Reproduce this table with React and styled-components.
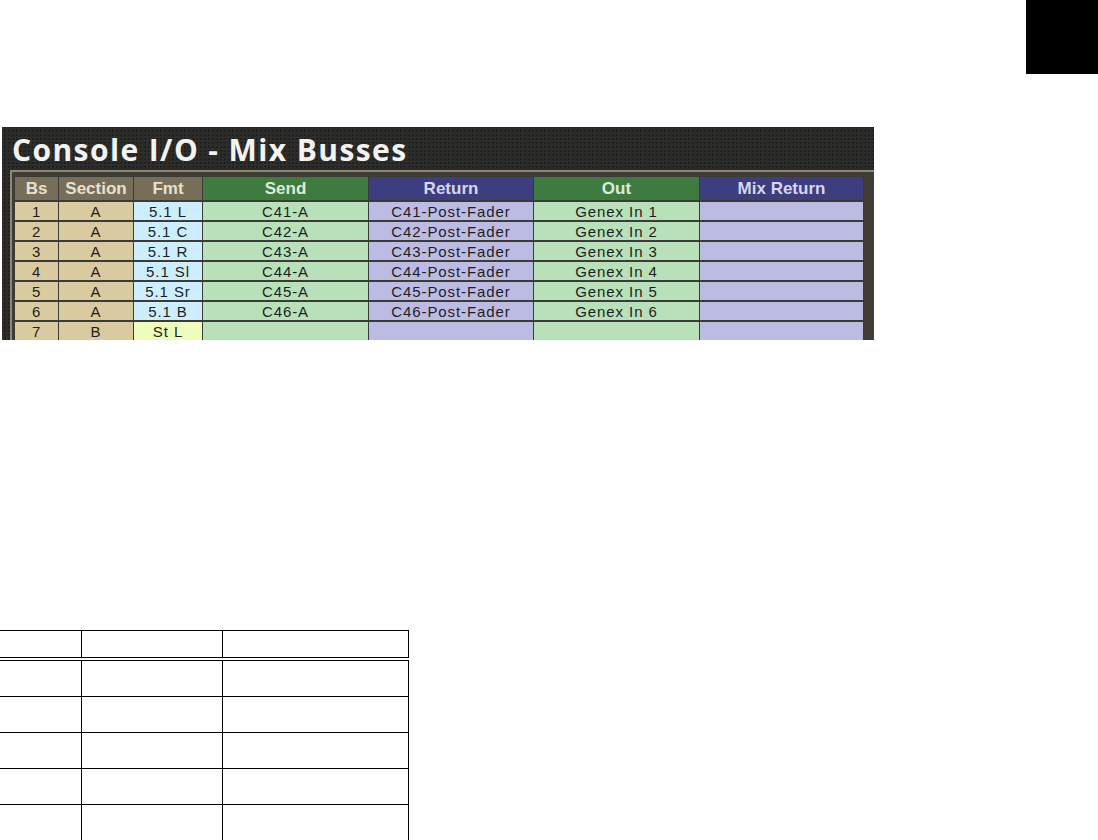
import React from "react"
import styled, { createGlobalStyle } from "styled-components"

const GlobalStyle = createGlobalStyle`
  body {
    margin: 0;
    background: #fff;
    font-family: "Liberation Sans", Arial, sans-serif;
  }
`

const busses = [
  { bs: 1, section: "A", fmt: "5.1 L", send: "C41-A", ret: "C41-Post-Fader", out: "Genex In 1" },
  { bs: 2, section: "A", fmt: "5.1 C", send: "C42-A", ret: "C42-Post-Fader", out: "Genex In 2" },
  { bs: 3, section: "A", fmt: "5.1 R", send: "C43-A", ret: "C43-Post-Fader", out: "Genex In 3" },
  { bs: 4, section: "A", fmt: "5.1 Sl", send: "C44-A", ret: "C44-Post-Fader", out: "Genex In 4" },
  { bs: 5, section: "A", fmt: "5.1 Sr", send: "C45-A", ret: "C45-Post-Fader", out: "Genex In 5" },
  { bs: 6, section: "A", fmt: "5.1 B", send: "C46-A", ret: "C46-Post-Fader", out: "Genex In 6" },
  { bs: 7, section: "B", fmt: "St L", send: "", ret: "", out: "", stereo: true },
]

const headBg = {
  tan: "#766e58",
  green: "#3e7b3e",
  blue: "#3d3d80",
}

const headInk = {
  tan: "#e6e1cf",
  green: "#dcebdc",
  blue: "#d6d6f0",
}

const cellBg = {
  tan: "#d9caa0",
  sky: "#cdeefe",
  lime: "#eefdbb",
  green: "#b9e1b9",
  blue: "#bcbbe4",
}

const App = () => {
  return (
    <Page>
      <GlobalStyle />
      <TopBar>
        <Tab />
      </TopBar>

      <Shot>
        <Title>Console I/O - Mix Busses</Title>
        <Frame>
          <Grid>
            <colgroup>
              <col width="44" />
              <col width="75" />
              <col width="69" />
              <col width="166" />
              <col width="165" />
              <col width="166" />
              <col width="164" />
            </colgroup>
            <thead>
              <tr>
                <Head tone="tan">Bs</Head>
                <Head tone="tan">Section</Head>
                <Head tone="tan">Fmt</Head>
                <Head tone="green">Send</Head>
                <Head tone="blue">Return</Head>
                <Head tone="green">Out</Head>
                <Head tone="blue">Mix Return</Head>
              </tr>
            </thead>
            <tbody>
              {busses.map((b) => (
                <tr key={b.bs}>
                  <Cell tone="tan">{b.bs}</Cell>
                  <Cell tone="tan">{b.section}</Cell>
                  <Cell tone={b.stereo ? "lime" : "sky"}>{b.fmt}</Cell>
                  <Cell tone="green">{b.send}</Cell>
                  <Cell tone="blue">{b.ret}</Cell>
                  <Cell tone="green">{b.out}</Cell>
                  <Cell tone="blue" />
                </tr>
              ))}
            </tbody>
          </Grid>
        </Frame>
      </Shot>

      <Blank>
        <thead>
          <tr>
            <BlankHead />
            <BlankHead />
            <BlankHead />
          </tr>
        </thead>
        <tbody>
          {[0, 1, 2, 3, 4].map((i) => (
            <tr key={i}>
              <BlankCell />
              <BlankCell />
              <BlankCell />
            </tr>
          ))}
        </tbody>
      </Blank>
    </Page>
  )
}

export default App

const Page = styled.div`
  width: 1098px;
  height: 840px;
  overflow: hidden;
`

const TopBar = styled.div`
  display: flex;
  justify-content: flex-end;
`

const Tab = styled.div`
  width: 72px;
  height: 74px;
  background: #000;
`

const Shot = styled.div`
  margin: 53px 0 0 2px;
  width: 872px;
  height: 213px;
  overflow: hidden;
  background-color: #2b2b2a;
  background-image: radial-gradient(rgba(255, 255, 255, 0.05) 1px, transparent 1px),
    radial-gradient(rgba(0, 0, 0, 0.25) 1px, transparent 1px);
  background-size: 3px 3px, 4px 4px;
  background-position: 0 0, 1px 2px;
`

const Title = styled.div`
  height: 43px;
  box-sizing: border-box;
  padding: 4px 0 0 10px;
  color: #f2f2f0;
  font-family: "Open Sans", "DejaVu Sans", sans-serif;
  font-weight: 700;
  font-size: 30px;
  line-height: 37px;
  letter-spacing: 1.4px;
  white-space: nowrap;
`

const Frame = styled.div`
  margin-left: 8px;
  height: 100%;
  border-top: 2px solid #8d8971;
  border-left: 2px solid #8d8971;
  padding: 4px 0 0 2px;
  background: #3f3d35;
`

const Grid = styled.table`
  border-collapse: collapse;
  table-layout: fixed;
  width: 849px;
`

const Head = styled.th`
  height: 23px;
  padding: 0;
  border: 1px solid #3a3a36;
  background: ${(p) => headBg[p.tone]};
  color: ${(p) => headInk[p.tone]};
  font-size: 17px;
  font-weight: 700;
  text-align: center;
  white-space: nowrap;
`

const Cell = styled.td`
  height: 18px;
  padding: 0;
  border: 1px solid #3a3a36;
  border-top-width: 2px;
  background: ${(p) => cellBg[p.tone]};
  color: #1e1e1e;
  font-size: 15px;
  letter-spacing: 0.9px;
  line-height: 17px;
  text-align: center;
  white-space: nowrap;
`

const Blank = styled.table`
  margin-top: 290px;
  width: 409px;
  border-collapse: collapse;
  table-layout: fixed;
`

const BlankHead = styled.th`
  height: 26px;
  padding: 0;
  border-top: 1px solid #000;
  border-bottom: 4px double #000;
  border-right: 1px solid #000;
  &:nth-child(1) { width: 81px; }
  &:nth-child(2) { width: 140px; }
`

const BlankCell = styled.td`
  height: 35px;
  padding: 0;
  border-bottom: 1px solid #000;
  border-right: 1px solid #000;
`
